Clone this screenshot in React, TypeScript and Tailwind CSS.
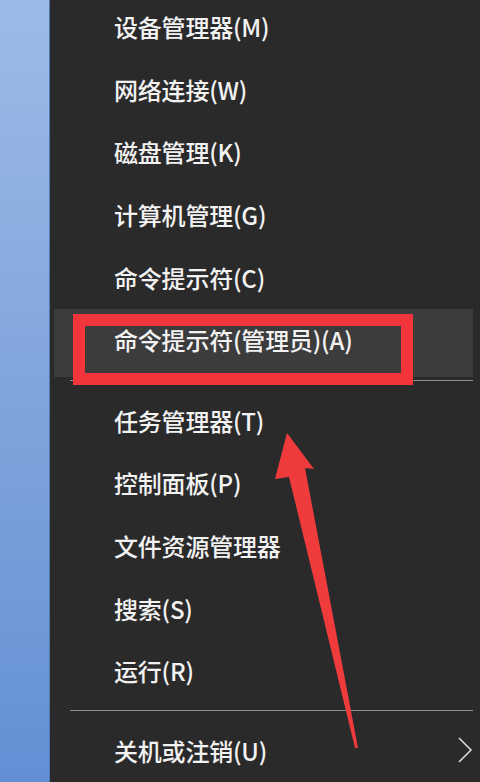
import React from "react";

const font = {
  fontFamily: '"Noto Sans CJK SC", "Noto Sans", sans-serif',
};

function Row({ label }: { label: string }) {
  return (
    <div className="h-[63px] flex items-center pl-[60px] text-[24px] leading-none font-medium tracking-[-0.2px] text-[#f2f2f2]">
      {label}
    </div>
  );
}

export default function App() {
  const top = ["设备管理器(M)", "网络连接(W)", "磁盘管理(K)", "计算机管理(G)", "命令提示符(C)"];
  const mid = ["任务管理器(T)", "控制面板(P)", "文件资源管理器", "搜索(S)", "运行(R)"];
  return (
    <div className="relative w-[480px] h-[782px] overflow-hidden flex bg-[#2b2a2b]" style={font}>
      <div className="w-[50px] h-full bg-gradient-to-b from-[#9dbbe6] via-[#80a5dc] to-[#6390d5] border-r border-[#5278b4]" />
      <div className="flex-1 flex flex-col pl-[4px] pr-[7px] -mt-[4px]">
        {top.map((t) => (
          <Row key={t} label={t} />
        ))}
        <div className="h-[68px] flex items-center pl-[60px] pb-[6px] bg-[#3d3c3d] text-[24px] leading-none font-medium tracking-[-0.2px] text-[#f2f2f2]">
          命令提示符(管理员)(A)
        </div>
        <div className="h-[13px] pt-[3px]">
          <div className="h-px ml-[16px] bg-[#8e8e8e]" />
        </div>
        {mid.map((t) => (
          <Row key={t} label={t} />
        ))}
        <div className="h-[17px] flex items-center">
          <div className="h-px w-full ml-[16px] bg-[#8e8e8e]" />
        </div>
        <div className="h-[63px] flex items-center justify-between pl-[60px] text-[24px] leading-none font-medium tracking-[-0.2px] text-[#f2f2f2]">
          <span>关机或注销(U)</span>
          <svg width="16" height="26" viewBox="0 0 16 26" className="-mt-[2px]">
            <path d="M2 1 L14 13 L2 25" fill="none" stroke="#d6d6d6" strokeWidth="1.6" />
          </svg>
        </div>
      </div>
      {/* red annotation box */}
      <div className="absolute left-[73px] top-[314px] w-[340px] h-[71px] border-[12px] border-[#f2353b]" />
      {/* red arrow */}
      <svg className="absolute inset-0" width="480" height="782" viewBox="0 0 480 782">
        <polygon
          points="287,433 314,469 305,468 358,748 355,748 289,477 275,479"
          fill="#f03b3d"
        />
      </svg>
    </div>
  );
}
